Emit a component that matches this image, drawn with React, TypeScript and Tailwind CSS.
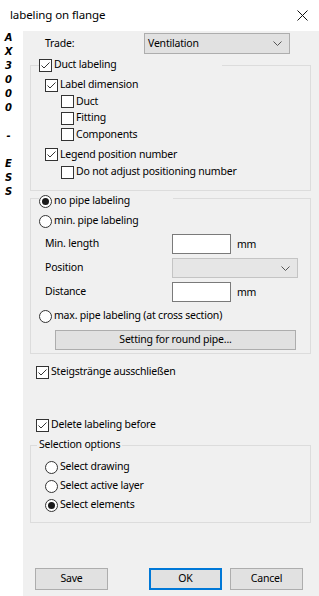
import React from 'react';

const Check: React.FC<{ checked?: boolean }> = ({ checked }) => (
  <span className="w-[13px] h-[13px] border border-[#333333] bg-white flex items-center justify-center shrink-0">
    {checked && (
      <svg width="11" height="11" viewBox="0 0 11 11">
        <path d="M1.5 5.5 L4 8 L9.5 2.5" stroke="#333333" strokeWidth="1" fill="none" />
      </svg>
    )}
  </span>
);

const Radio: React.FC<{ checked?: boolean }> = ({ checked }) => (
  <span className="w-[13px] h-[13px] rounded-full border border-[#333333] bg-white flex items-center justify-center shrink-0">
    {checked && <span className="w-[7px] h-[7px] rounded-full bg-[#1a1a1a]" />}
  </span>
);

const Chevron = () => (
  <svg width="9" height="5" viewBox="0 0 9 5">
    <path d="M0.5 0.5 L4.5 4.5 L8.5 0.5" stroke="#555555" strokeWidth="1" fill="none" />
  </svg>
);

const strip = ['A', 'X', '3', '0', '0', '0', '', '-', '', 'E', 'S', 'S'];

export default function App() {
  return (
    <div
      className="w-[319px] h-[596px] bg-white flex flex-col text-black text-[10.5px] tracking-[-0.2px] overflow-hidden"
      style={{ fontFamily: '"Noto Sans", "Open Sans", sans-serif' }}
    >
      {/* title bar */}
      <div className="h-[31px] flex items-center justify-between pl-[10px] pr-[11px] shrink-0">
        <span className="text-[11.5px] tracking-[-0.1px] -mt-[1px]">labeling on flange</span>
        <svg width="11" height="11" viewBox="0 0 11 11" className="mt-[-1px]">
          <path d="M0.5 0.5 L10.5 10.5 M10.5 0.5 L0.5 10.5" stroke="#111111" strokeWidth="1" />
        </svg>
      </div>

      <div className="flex flex-1">
        {/* left strip */}
        <div
          className="w-[23px] shrink-0 flex flex-col items-center pr-[6px] font-bold italic text-[10px] leading-[14px] tracking-normal"
          style={{ fontFamily: '"DejaVu Sans", sans-serif' }}
        >
          {strip.map((c, i) => (
            <span key={i} className="h-[14px]">{c}</span>
          ))}
        </div>

        {/* main panel */}
        <div className="flex-1 bg-[#f0f0f0] flex flex-col">
          {/* trade */}
          <div className="mt-[2px] h-[21px] flex items-center">
            <span className="ml-[22px] w-[99px]">Trade:</span>
            <div className="w-[146px] h-[21px] bg-[#e1e1e1] border border-[#adadad] flex items-center justify-between pl-[3px] pr-[7px]">
              <span>Ventilation</span>
              <Chevron />
            </div>
          </div>

          {/* duct labeling group */}
          <div className="mt-[11px] ml-[7px] w-[281px] border border-[#dcdcdc] flex flex-col pb-[9px]">
            <div className="-mt-[8px] ml-[8px] w-[183px] h-[14px] bg-[#f0f0f0] flex items-center gap-[2px]">
              <Check checked />
              <span>Duct labeling</span>
            </div>
            <div className="mt-[5px] ml-[14px] h-[16px] flex items-center gap-[2px]">
              <Check checked />
              <span>Label dimension</span>
            </div>
            <div className="ml-[30px] h-[17px] flex items-center gap-[2px]">
              <Check />
              <span>Duct</span>
            </div>
            <div className="ml-[30px] h-[16px] flex items-center gap-[2px]">
              <Check />
              <span>Fitting</span>
            </div>
            <div className="ml-[30px] h-[17px] flex items-center gap-[2px]">
              <Check />
              <span>Components</span>
            </div>
            <div className="mt-[3px] ml-[14px] h-[17px] flex items-center gap-[2px]">
              <Check checked />
              <span>Legend position number</span>
            </div>
            <div className="ml-[30px] h-[18px] flex items-center gap-[2px]">
              <Check />
              <span>Do not adjust positioning number</span>
            </div>
          </div>

          {/* pipe labeling group */}
          <div className="mt-[7px] ml-[7px] w-[281px] border border-[#dcdcdc] flex flex-col pb-[3px]">
            <div className="-mt-[5px] ml-[8px] w-[134px] h-[14px] bg-[#f0f0f0] flex items-center gap-[2px]">
              <Radio checked />
              <span>no pipe labeling</span>
            </div>
            <div className="mt-[5px] ml-[8px] h-[16px] flex items-center gap-[2px]">
              <Radio />
              <span>min. pipe labeling</span>
            </div>
            <div className="mt-[5px] ml-[14px] h-[20px] flex items-center">
              <span className="w-[127px]">Min. length</span>
              <div className="w-[59px] h-[20px] bg-white border border-[#7a7a7a]" />
              <span className="ml-[6px] mt-[2px]">mm</span>
            </div>
            <div className="mt-[4px] ml-[14px] h-[20px] flex items-center">
              <span className="w-[127px]">Position</span>
              <div className="w-[126px] h-[20px] bg-[#e6e6e6] border border-[#c4c4c4] flex items-center justify-end pr-[7px]">
                <Chevron />
              </div>
            </div>
            <div className="mt-[4px] ml-[14px] h-[20px] flex items-center">
              <span className="w-[127px]">Distance</span>
              <div className="w-[59px] h-[20px] bg-white border border-[#7a7a7a]" />
              <span className="ml-[6px] mt-[2px]">mm</span>
            </div>
            <div className="mt-[6px] ml-[8px] h-[16px] flex items-center gap-[2px]">
              <Radio />
              <span>max. pipe labeling (at cross section)</span>
            </div>
            <button className="mt-[6px] ml-[24px] w-[241px] h-[20px] bg-[#e1e1e1] border border-[#adadad] flex items-center justify-center">
              Setting for round pipe...
            </button>
          </div>

          <div className="mt-[10px] ml-[13px] h-[16px] flex items-center gap-[2px]">
            <Check checked />
            <span>Steigstränge ausschließen</span>
          </div>

          <div className="mt-[37px] ml-[13px] h-[16px] flex items-center gap-[2px]">
            <Check checked />
            <span>Delete labeling before</span>
          </div>

          {/* selection options */}
          <div className="mt-[12px] ml-[7px] w-[281px] border border-[#dcdcdc] flex flex-col pb-[9px]">
            <div className="-mt-[8px] ml-[6px] h-[14px] self-start bg-[#f0f0f0] px-[2px] flex items-center">
              Selection options
            </div>
            <div className="mt-[7px] ml-[14px] h-[16px] flex items-center gap-[2px]">
              <Radio />
              <span>Select drawing</span>
            </div>
            <div className="mt-[3px] ml-[14px] h-[16px] flex items-center gap-[2px]">
              <Radio />
              <span>Select active layer</span>
            </div>
            <div className="mt-[3px] ml-[14px] h-[16px] flex items-center gap-[2px]">
              <Radio checked />
              <span>Select elements</span>
            </div>
          </div>

          {/* buttons */}
          <div className="mt-[45px] flex items-center">
            <button className="ml-[12px] w-[73px] h-[22px] bg-[#e1e1e1] border border-[#adadad]">Save</button>
            <button className="ml-[41px] w-[73px] h-[22px] bg-[#e1e1e1] border-2 border-[#0078d7]">OK</button>
            <button className="ml-[8px] w-[73px] h-[22px] bg-[#e1e1e1] border border-[#adadad]">Cancel</button>
          </div>
        </div>
      </div>
    </div>
  );
}
